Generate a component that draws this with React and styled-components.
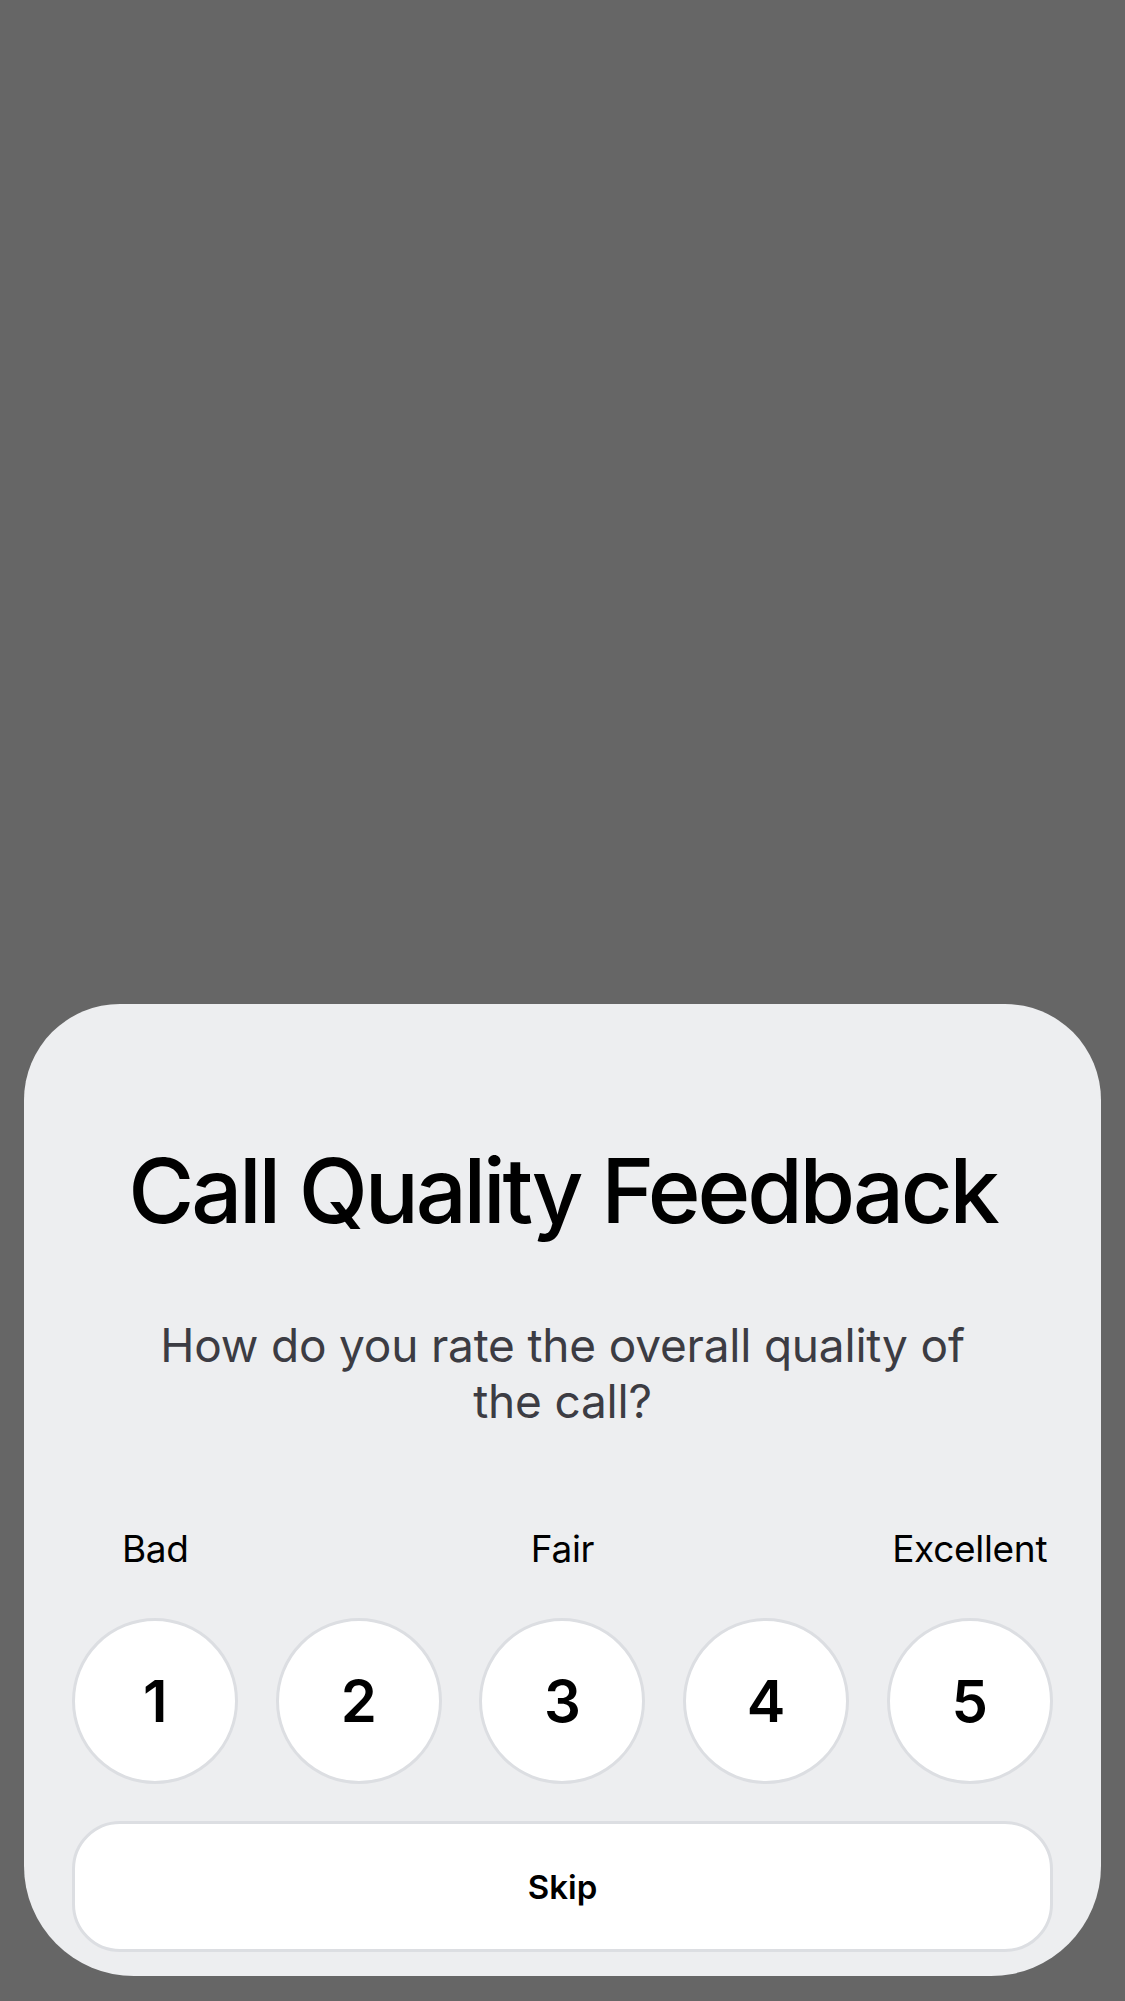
import React, { useState } from "react";
import styled, { createGlobalStyle } from "styled-components";

const GlobalStyle = createGlobalStyle`
  html, body {
    margin: 0;
    padding: 0;
    background: #666666;
    font-family: Inter, "Noto Sans", "Liberation Sans", sans-serif;
    -webkit-font-smoothing: antialiased;
  }
`;

const labels = { 1: "Bad", 3: "Fair", 5: "Excellent" };

function App() {
  const [rating, setRating] = useState(null);

  return (
    <>
      <GlobalStyle />
      <Backdrop>
        <Sheet>
          <Title>Call Quality Feedback</Title>
          <Question>How do you rate the overall quality of the call?</Question>

          <ScaleGrid>
            {[1, 2, 3, 4, 5].map((n) => (
              <Label key={n}>{labels[n] || ""}</Label>
            ))}
          </ScaleGrid>

          <ScaleGrid $rows>
            {[1, 2, 3, 4, 5].map((n) => (
              <RateButton key={n} $active={rating === n} onClick={() => setRating(n)}>
                {n}
              </RateButton>
            ))}
          </ScaleGrid>

          <SkipButton>Skip</SkipButton>
        </Sheet>
      </Backdrop>
    </>
  );
}

// styled components
const Backdrop = styled.div`
  min-height: 2001px;
  display: flex;
  flex-direction: column;
  justify-content: flex-end;
  box-sizing: border-box;
  padding: 0 24px 25px 24px;
`;

const Sheet = styled.div`
  background: #edeef0;
  border-radius: 96px 96px 110px 110px;
  padding: 133px 48px 24px 48px;
  display: flex;
  flex-direction: column;
  align-items: stretch;
`;

const Title = styled.h1`
  margin: 0;
  text-align: center;
  font-size: 90px;
  line-height: 108px;
  font-weight: 500;
  letter-spacing: -3.2px;
  color: #000;
`;

const Question = styled.p`
  margin: 72px auto 0;
  max-width: 860px;
  text-align: center;
  font-size: 46px;
  line-height: 56px;
  font-weight: 400;
  letter-spacing: -0.2px;
  color: #3c3c43;
`;

const ScaleGrid = styled.div`
  display: grid;
  grid-template-columns: repeat(5, 1fr);
  column-gap: 37px;
  margin-top: ${(p) => (p.$rows ? "47px" : "97px")};
`;

const Label = styled.span`
  text-align: center;
  font-size: 37px;
  line-height: 45px;
  letter-spacing: -0.3px;
  color: #000;
`;

const RateButton = styled.button`
  width: 166px;
  height: 166px;
  justify-self: center;
  box-sizing: border-box;
  border-radius: 50%;
  border: 3px solid #dcdee2;
  background: ${(p) => (p.$active ? "#e4e6ea" : "#ffffff")};
  font-family: inherit;
  font-size: 58px;
  font-weight: 600;
  color: #000;
  cursor: pointer;
  padding: 0;
`;

const SkipButton = styled.button`
  margin-top: 37px;
  height: 131px;
  box-sizing: border-box;
  border-radius: 48px;
  border: 3px solid #dcdee2;
  background: #ffffff;
  font-family: inherit;
  font-size: 33px;
  font-weight: 600;
  color: #000;
  cursor: pointer;
`;

export default App;
